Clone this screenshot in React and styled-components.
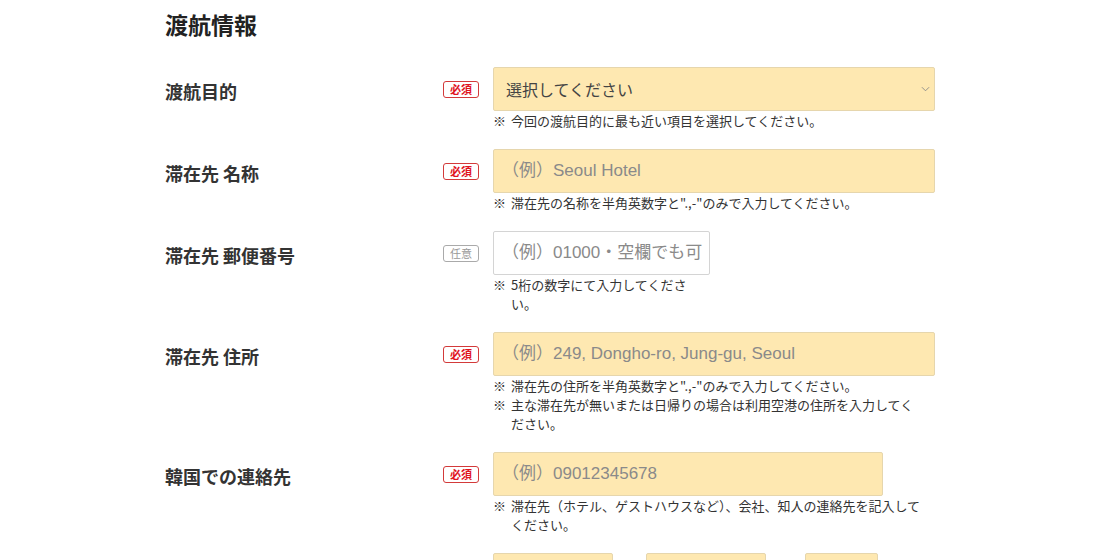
import React from "react";
import styled, { createGlobalStyle } from "styled-components";

const GlobalStyle = createGlobalStyle`
  html, body {
    margin: 0;
    padding: 0;
    background: #fff;
  }
  body {
    font-family: "Noto Sans CJK JP", "Liberation Sans", sans-serif;
    color: #333;
  }
  * {
    box-sizing: border-box;
  }
`;

const rows = [
  {
    label: "渡航目的",
    required: true,
    type: "select",
    placeholder: "選択してください",
    width: 442,
    notes: ["今回の渡航目的に最も近い項目を選択してください。"],
  },
  {
    label: "滞在先 名称",
    required: true,
    placeholder: "（例）Seoul Hotel",
    width: 442,
    notes: ['滞在先の名称を半角英数字と".,-"のみで入力してください。'],
  },
  {
    label: "滞在先 郵便番号",
    required: false,
    placeholder: "（例）01000・空欄でも可",
    width: 217,
    noteWidth: 217,
    notes: ["5桁の数字にて入力してください。"],
  },
  {
    label: "滞在先 住所",
    required: true,
    placeholder: "（例）249, Dongho-ro, Jung-gu, Seoul",
    width: 442,
    notes: [
      '滞在先の住所を半角英数字と".,-"のみで入力してください。',
      "主な滞在先が無いまたは日帰りの場合は利用空港の住所を入力してください。",
    ],
  },
  {
    label: "韓国での連絡先",
    required: true,
    placeholder: "（例）09012345678",
    width: 390,
    notes: ["滞在先（ホテル、ゲストハウスなど）、会社、知人の連絡先を記入してください。"],
  },
];

export default function App() {
  return (
    <>
      <GlobalStyle />
      <Page>
        <Title>渡航情報</Title>
        {rows.map((row) => (
          <Row key={row.label}>
            <Label>{row.label}</Label>
            <Badge $required={row.required}>{row.required ? "必須" : "任意"}</Badge>
            <Field>
              {row.type === "select" ? (
                <SelectWrap style={{ width: row.width }}>
                  <Select defaultValue="">
                    <option value="">{row.placeholder}</option>
                  </Select>
                  <Chevron viewBox="0 0 10 6" width="9" height="6">
                    <path d="M1 1 L5 5 L9 1" fill="none" stroke="#888" strokeWidth="1" />
                  </Chevron>
                </SelectWrap>
              ) : (
                <Input
                  $filled={row.required}
                  placeholder={row.placeholder}
                  style={{ width: row.width }}
                />
              )}
              <Notes style={{ width: row.noteWidth || 428 }}>
                {row.notes.map((n) => (
                  <Note key={n}>
                    <Mark>※</Mark>
                    {n}
                  </Note>
                ))}
              </Notes>
            </Field>
          </Row>
        ))}
        <Row>
          <Label>到着予定日</Label>
          <Badge $required>必須</Badge>
          <Field>
            <DateRow>
              <Input $filled placeholder="2024" style={{ width: 120 }} />
              <Sep>年</Sep>
              <Input $filled placeholder="01" style={{ width: 120 }} />
              <Sep $wide>月</Sep>
              <Input $filled placeholder="01" style={{ width: 73 }} />
              <Sep>日</Sep>
            </DateRow>
          </Field>
        </Row>
      </Page>
    </>
  );
}

const Page = styled.div`
  width: 770px;
  margin: 0 auto;
`;

const Title = styled.h2`
  margin: 0;
  padding-top: 8px;
  margin-bottom: 27px;
  font-size: 23px;
  line-height: 32px;
  font-weight: 700;
  color: #222;
`;

const Row = styled.div`
  display: grid;
  grid-template-columns: 278px 36px 1fr;
  align-items: start;
  margin-bottom: 19px;
`;

const Label = styled.div`
  padding-top: 12px;
  font-size: 18px;
  line-height: 24px;
  font-weight: 700;
  color: #333;
`;

const Badge = styled.span`
  margin-top: 14px;
  width: 36px;
  height: 17px;
  display: flex;
  align-items: center;
  justify-content: center;
  font-size: 11px;
  line-height: 1;
  border-radius: 3px;
  color: ${(p) => (p.$required ? "#e0141e" : "#999")};
  border: 1px solid ${(p) => (p.$required ? "#d33a3a" : "#aaa")};
  font-weight: ${(p) => (p.$required ? 700 : 400)};
`;

const Field = styled.div`
  margin-left: 14px;
  display: flex;
  flex-direction: column;
`;

const Input = styled.input`
  height: 44px;
  padding: 0 4px 0 8px;
  font-family: "Liberation Sans", "Noto Sans CJK JP", sans-serif;
  font-size: 17px;
  color: #333;
  background: ${(p) => (p.$filled ? "#fee8b1" : "#fff")};
  border: 1px solid ${(p) => (p.$filled ? "#e6d6ad" : "#d4d4d4")};
  border-radius: 2px;
  outline: none;
  &::placeholder {
    color: #8a8a8a;
  }
`;

const SelectWrap = styled.div`
  position: relative;
  height: 44px;
`;

const Select = styled.select`
  width: 100%;
  height: 44px;
  padding: 0 30px 0 12px;
  appearance: none;
  -webkit-appearance: none;
  font-family: "Noto Sans CJK JP", "Liberation Sans", sans-serif;
  font-size: 16px;
  color: #444;
  background: #fee8b1;
  border: 1px solid #e6d6ad;
  border-radius: 2px;
  outline: none;
`;

const Chevron = styled.svg`
  position: absolute;
  right: 5px;
  top: 19px;
  pointer-events: none;
`;

const Notes = styled.div`
  display: flex;
  flex-direction: column;
`;

const Note = styled.p`
  margin: 0;
  padding-left: 18px;
  text-indent: -18px;
  font-size: 13px;
  line-height: 19px;
  color: #333;
`;

const Mark = styled.span`
  display: inline-block;
  width: 18px;
  text-indent: 0;
`;

const DateRow = styled.div`
  display: flex;
  align-items: center;
`;

const Sep = styled.span`
  width: ${(p) => (p.$wide ? "39px" : "33px")};
  text-align: center;
  font-size: 15px;
  color: #333;
`;
